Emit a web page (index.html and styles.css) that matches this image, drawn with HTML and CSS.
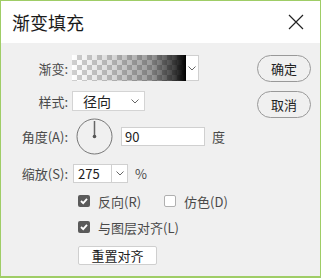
FILE: index.html
```html
<!DOCTYPE html>
<html lang="zh">
<head>
<meta charset="utf-8">
<link rel="stylesheet" href="styles.css">
</head>
<body>
<div class="window">
  <div class="titlebar">
    <span class="title">渐变填充</span>
    <svg class="close" width="16" height="16" viewBox="0 0 16 16"><path d="M1 1 L15 15 M15 1 L1 15" stroke="#222" stroke-width="1.2" fill="none"/></svg>
  </div>
  <div class="body">
    <div class="form">
      <div class="row r1">
        <span class="label">渐变:</span>
        <div class="swatch-wrap">
          <div class="swatch"></div>
          <div class="swatch-btn"><svg width="8" height="5" viewBox="0 0 8 5"><path d="M0.5 0.5 L4 4 L7.5 0.5" stroke="#666" fill="none"/></svg></div>
        </div>
      </div>
      <div class="row r2">
        <span class="label">样式:</span>
        <div class="select">
          <span>径向</span>
          <svg width="8" height="5" viewBox="0 0 8 5"><path d="M0.5 0.5 L4 4 L7.5 0.5" stroke="#666" fill="none"/></svg>
        </div>
      </div>
      <div class="row r3">
        <span class="label">角度(A):</span>
        <svg class="dial" width="37" height="37" viewBox="0 0 37 37">
          <circle cx="18.5" cy="18.5" r="17.5" stroke="#777" fill="none" stroke-width="1"/>
          <path d="M18.5 3 L18.5 18" stroke="#666" stroke-width="1.5"/>
          <circle cx="18.5" cy="18.5" r="1.8" fill="#555"/>
        </svg>
        <div class="input">90</div>
        <span class="unit">度</span>
      </div>
      <div class="row r4">
        <span class="label">缩放(S):</span>
        <div class="combo">
          <span class="combo-val">275</span>
          <span class="combo-btn"><svg width="8" height="5" viewBox="0 0 8 5"><path d="M0.5 0.5 L4 4 L7.5 0.5" stroke="#666" fill="none"/></svg></span>
        </div>
        <span class="pct">%</span>
      </div>
      <div class="row r5 indent">
        <span class="check on"><svg width="12" height="12" viewBox="0 0 12 12"><path d="M3 6 L5.2 8.2 L9 3.8" stroke="#fff" stroke-width="1.8" fill="none"/></svg></span>
        <span class="ctext">反向(R)</span>
        <span class="check off second"></span>
        <span class="ctext">仿色(D)</span>
      </div>
      <div class="row r6 indent">
        <span class="check on"><svg width="12" height="12" viewBox="0 0 12 12"><path d="M3 6 L5.2 8.2 L9 3.8" stroke="#fff" stroke-width="1.8" fill="none"/></svg></span>
        <span class="ctext">与图层对齐(L)</span>
      </div>
      <div class="row r7 indent">
        <div class="btn-reset">重置对齐</div>
      </div>
    </div>
    <div class="actions">
      <div class="pill">确定</div>
      <div class="pill">取消</div>
    </div>
  </div>
</div>
</body>
</html>
```
FILE: styles.css
```css
html, body {
  margin: 0;
  padding: 0;
}
body {
  font-family: "Noto Sans CJK SC", "Noto Sans", sans-serif;
  color: #4a4a4a;
  font-size: 13px;
}
.window {
  width: 321px;
  height: 278px;
  box-sizing: border-box;
  border: 1px solid #9fcd66;
  border-bottom: 2px solid #9fcd66;
  display: flex;
  flex-direction: column;
  background: #f0f0f0;
}
.titlebar {
  height: 42px;
  background: #fff;
  display: flex;
  align-items: center;
  justify-content: space-between;
  padding: 0 16px 0 11px;
  flex-shrink: 0;
}
.title {
  font-size: 18px;
  color: #1a1a1a;
  line-height: 1;
  margin-top: -1px;
}
.close {
  display: block;
  margin-top: -1px;
}
.body {
  flex: 1;
  display: flex;
  justify-content: space-between;
  padding: 12px 9px 0 0;
}
.form {
  display: flex;
  flex-direction: column;
}
.row {
  display: flex;
  align-items: center;
}
.label {
  width: 71px;
  text-align: right;
  padding-right: 4px;
  box-sizing: border-box;
  line-height: 1;
  white-space: nowrap;
}
.r1 { height: 26px; }
.r2 { height: 20px; margin-top: 10px; }
.r3 { height: 37px; margin-top: 7px; }
.r4 { height: 19px; margin-top: 9px; }
.r5 { height: 14px; margin-top: 11px; }
.r6 { height: 14px; margin-top: 12px; }
.r7 { height: 19px; margin-top: 12px; }
.indent { padding-left: 76px; }

.swatch-wrap {
  display: flex;
  height: 26px;
}
.swatch {
  width: 114px;
  height: 26px;
  background:
    linear-gradient(to right, rgba(0,0,0,0) 0%, rgba(0,0,0,0.15) 35%, rgba(0,0,0,0.4) 70%, rgba(0,0,0,0.75) 90%, rgba(0,0,0,1) 100%),
    conic-gradient(#cfcfcf 25%, #fff 0 50%, #cfcfcf 0 75%, #fff 0) 0 0 / 10px 10px;
}
.swatch-btn {
  width: 13px;
  height: 26px;
  box-sizing: border-box;
  background: #fff;
  border: 1px solid #d0d0d0;
  border-left: none;
  display: flex;
  align-items: center;
  justify-content: center;
}
.select {
  width: 73px;
  height: 20px;
  box-sizing: border-box;
  background: #fff;
  border: 1px solid #d4d4d4;
  display: flex;
  align-items: center;
  justify-content: space-between;
  padding: 0 5px 0 10px;
  font-size: 14px;
  color: #222;
}
.dial {
  display: block;
  margin-left: 4px;
}
.input {
  width: 84px;
  height: 19px;
  box-sizing: border-box;
  background: #fff;
  border: 1px solid #d0d0d0;
  margin-left: 8px;
  padding-left: 3px;
  line-height: 17px;
  color: #222;
}
.unit { margin-left: 7px; }
.combo {
  width: 55px;
  height: 19px;
  box-sizing: border-box;
  background: #fff;
  border: 1px solid #d0d0d0;
  margin-left: 1px;
  display: flex;
}
.combo-val {
  width: 38px;
  box-sizing: border-box;
  border-right: 1px solid #d0d0d0;
  padding-left: 4px;
  line-height: 17px;
  color: #222;
}
.combo-btn {
  flex: 1;
  display: flex;
  align-items: center;
  justify-content: center;
}
.pct { margin-left: 7px; }
.check {
  width: 12px;
  height: 12px;
  box-sizing: border-box;
  border-radius: 2px;
  display: block;
  margin-left: 1px;
}
.check svg { display: block; }
.check.on { background: #5a5a5a; }
.check.off {
  background: #fff;
  border: 1px solid #b0b0b0;
}
.check.second { margin-left: 23px; }
.ctext {
  margin-left: 8px;
  line-height: 1;
}
.btn-reset {
  width: 79px;
  height: 19px;
  box-sizing: border-box;
  margin-left: 1px;
  background: #fff;
  border: 1px solid #cfcfcf;
  border-radius: 2px;
  text-align: center;
  line-height: 17px;
  color: #222;
}
.actions {
  display: flex;
  flex-direction: column;
  gap: 9px;
}
.pill {
  width: 54px;
  height: 27px;
  box-sizing: border-box;
  border: 1px solid #999;
  border-radius: 14px;
  text-align: center;
  line-height: 25px;
  color: #222;
}
```
